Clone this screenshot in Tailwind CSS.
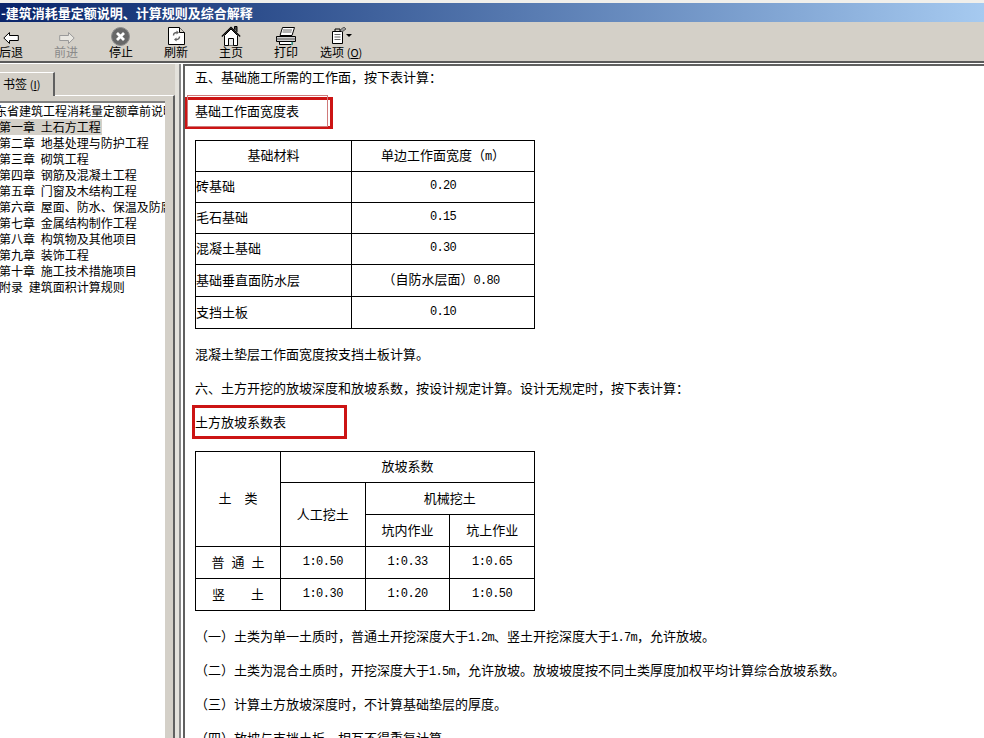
<!DOCTYPE html>
<html lang="zh">
<head>
  <meta charset="UTF-8" />
  <title>建筑消耗量定额说明、计算规则及综合解释</title>
  <script src="https://cdn.jsdelivr.net/npm/@tailwindcss/browser@4"></script>
</head>
<body class="w-[984px] h-[738px] overflow-hidden bg-[#d4d0c8] flex flex-col text-black font-['Noto_Sans_CJK_SC',sans-serif] text-[12px]">

  <!-- Title bar -->
  <div class="h-[3px] bg-[#f0efeb]"></div>
  <div class="h-[19px] bg-gradient-to-r from-[#0a246a] to-[#a6caf0] text-white font-bold text-[13px] leading-[19px] whitespace-nowrap pl-[1px]">-建筑消耗量定额说明、计算规则及综合解释</div>

  <!-- Toolbar -->
  <div class="h-[41px] relative border-b-2 border-[#5a5a5a] shrink-0">
    <div class="absolute left-0 top-0 w-[24px]">
      <svg class="absolute left-[3px] top-[10px]" width="16" height="12" viewBox="0 0 16 12"><path d="M6.500.5.800 6l5.700 5.500V8.500h8.800v-5H6.500z" fill="#fff" stroke="#000"/></svg>
      <span class="absolute -left-[1px] top-[21px] whitespace-nowrap">后退</span>
    </div>
    <div class="absolute left-[54px] top-0 w-[24px] text-[#8a8a8a]">
      <svg class="absolute left-[5px] top-[10px]" width="16" height="12" viewBox="0 0 16 12"><path d="M9.500.5 15.200 6l-5.700 5.500V8.500H.7v-5h8.800z" fill="#e9e7e1" stroke="#9a9a9a"/></svg>
      <span class="absolute left-0 top-[21px] whitespace-nowrap">前进</span>
    </div>
    <div class="absolute left-[109px] top-0 w-[24px]">
      <svg class="absolute left-[2px] top-[5px]" width="19" height="19" viewBox="0 0 19 19"><circle cx="9.500" cy="9.500" r="9" fill="#686868" stroke="#8c8c8c"/><path d="M6 6l7 7m0-7l-7 7" stroke="#fff" stroke-width="2.800"/></svg>
      <span class="absolute left-0 top-[21px] whitespace-nowrap">停止</span>
    </div>
    <div class="absolute left-[164px] top-0 w-[24px]">
      <svg class="absolute left-[4px] top-[5px]" width="17" height="18" viewBox="0 0 17 18"><path d="M.5.5h11l5 5v12H.5z" fill="#fff" stroke="#000"/><path d="M11.500.5v5h5" fill="#d4d0c8" stroke="#000"/><path d="M5.500 8.500c0-2 1.500-3 3.500-3" fill="none" stroke="#666" stroke-width="1.400"/><path d="M8.500 3.500l2.500 2-2.500 2z" fill="#666"/><path d="M11.500 9.500c0 2-1.500 3-3.500 3" fill="none" stroke="#666" stroke-width="1.400"/><path d="M8.500 10.500l-2.500 2 2.500 2z" fill="#666"/></svg>
      <span class="absolute left-0 top-[21px] whitespace-nowrap">刷新</span>
    </div>
    <div class="absolute left-[219px] top-0 w-[24px]">
      <svg class="absolute left-[2px] top-[4px]" width="20" height="20" viewBox="0 0 20 20"><path d="M3.500 9.500v10h13v-10L10 3z" fill="#fff" stroke="#000"/><path d="M.8 10.500 10 1.500l9.200 9" fill="none" stroke="#000" stroke-width="1.300"/><path d="M7.500 19.500v-7h5v7" fill="#e8e8e8" stroke="#000"/><path d="M13.500 3.500V.5h2.500v5.500" fill="#444" stroke="#000"/></svg>
      <span class="absolute left-0 top-[21px] whitespace-nowrap">主页</span>
    </div>
    <div class="absolute left-[274px] top-0 w-[24px]">
      <svg class="absolute left-[2px] top-[5px]" width="20" height="19" viewBox="0 0 20 19"><path d="M6.500.5h12l-2.500 8H4z" fill="#fff" stroke="#000"/><path d="M7 3h9M6.500 5h9" stroke="#666"/><path d="M.5 9.500h19v5H.5z" fill="#d0d0d0" stroke="#000"/><path d="M.5 12h19" stroke="#555"/><path d="M3.500 14.500h13v3h-13z" fill="#fff" stroke="#000"/><path d="M16 15v3" stroke="#4fb3a5" stroke-width="1.500"/></svg>
      <span class="absolute left-0 top-[21px] whitespace-nowrap">打印</span>
    </div>
    <div class="absolute left-[320px] top-0 w-[42px]">
      <svg class="absolute left-[12px] top-[5px]" width="20" height="17" viewBox="0 0 20 17"><path d="M.5 4.500h10v12H.5z" fill="#fff" stroke="#000"/><path d="M2.500 7.500h6M2.500 10h6M2.500 12.500h6" stroke="#666"/><path d="M3 4V2h5v2" fill="none" stroke="#000"/><path d="M8 3l4-3 2 2-4 3z" fill="#999" stroke="#333" stroke-width=".7"/><path d="M14 7h6l-3 3z" fill="#000"/></svg>
      <span class="absolute left-0 top-[21px] whitespace-nowrap">选项 <span class="text-[11px]">(<span class="underline">O</span>)</span></span>
    </div>
  </div>

  <div class="flex-1 flex min-h-0 border-t border-white">
    <!-- Left pane -->
    <div class="w-[175px] shrink-0 pt-[8px] flex flex-col">
      <div class="relative h-[24px] -mb-[1px] w-[55px] bg-[#d4d0c8] border-r-2 border-t border-[#606060] border-t-white pl-[3px] leading-[22px] whitespace-nowrap">书签 <span class="text-[11px]">(<span class="underline">I</span>)</span></div>
      <div class="flex-1 min-h-0 border-t border-white border-r-2 border-r-[#606060] pr-[8px] pt-[5px]">
        <div class="h-full bg-white border-t-2 border-[#808080] overflow-hidden">
          <ul class="-ml-[1px] leading-[16px] whitespace-nowrap overflow-hidden [word-spacing:3px]">
            <li class="-ml-[4px]">东省建筑工程消耗量定额章前说明</li>
            <li class="bg-[#d4d0c8] w-[103px]">第一章 土石方工程</li>
            <li>第二章 地基处理与防护工程</li>
            <li>第三章 砌筑工程</li>
            <li>第四章 钢筋及混凝土工程</li>
            <li>第五章 门窗及木结构工程</li>
            <li>第六章 屋面、防水、保温及防腐工程</li>
            <li>第七章 金属结构制作工程</li>
            <li>第八章 构筑物及其他项目</li>
            <li>第九章 装饰工程</li>
            <li>第十章 施工技术措施项目</li>
            <li>附录 建筑面积计算规则</li>
          </ul>
        </div>
      </div>
    </div>

    <!-- Splitter -->
    <div class="w-[8px] shrink-0 flex">
      <div class="w-[6px] bg-[#e4e2dc] border-r-2 border-[#8a8a8a]"></div>
      <div class="w-[2px] bg-white"></div>
    </div>

    <!-- Document -->
    <div class="flex-1 min-w-0 bg-white border-l-[2px] border-t-[2px] border-[#606060] pl-[10px] pt-[3px] overflow-hidden relative text-[13px]">
      <p class="h-[16px] leading-[16px] whitespace-nowrap">五、基础施工所需的工作面，按下表计算：</p>
      <p class="mt-[18px] h-[16px] leading-[16px]">基础工作面宽度表</p>

      <div class="absolute left-0 top-[31px] w-[148px] h-[32px] border-[3px] border-[#cc1414]"></div>
      <div class="absolute left-[2px] top-[29px] w-[141px] h-[32px] border border-[#d07a7a]"></div>

      <table class="mt-[21px] border-collapse border border-black table-fixed w-[340px]">
        <tbody>
          <tr class="h-[31px]"><td class="border border-black w-[156px] text-center pb-[2px]">基础材料</td><td class="border border-black text-center pb-[2px]">单边工作面宽度（<span class="font-['Liberation_Mono'] text-[12px]">m</span>）</td></tr>
          <tr class="h-[31px]"><td class="border border-black pb-[2px]">砖基础</td><td class="border border-black text-center font-['Liberation_Mono'] text-[12px] tracking-[-0.7px] pb-[2px]">0.20</td></tr>
          <tr class="h-[31px]"><td class="border border-black pb-[2px]">毛石基础</td><td class="border border-black text-center font-['Liberation_Mono'] text-[12px] tracking-[-0.7px] pb-[2px]">0.15</td></tr>
          <tr class="h-[31px]"><td class="border border-black pb-[2px]">混凝土基础</td><td class="border border-black text-center font-['Liberation_Mono'] text-[12px] tracking-[-0.7px] pb-[2px]">0.30</td></tr>
          <tr class="h-[32px]"><td class="border border-black pb-[2px]">基础垂直面防水层</td><td class="border border-black text-center pb-[2px] pr-[4px]">（自防水层面）<span class="font-['Liberation_Mono'] text-[12px] tracking-[-0.7px]">0.80</span></td></tr>
          <tr class="h-[32px]"><td class="border border-black pb-[2px]">支挡土板</td><td class="border border-black text-center font-['Liberation_Mono'] text-[12px] tracking-[-0.7px] pb-[2px]">0.10</td></tr>
        </tbody>
      </table>

      <p class="mt-[17px] h-[16px] leading-[16px]">混凝土垫层工作面宽度按支挡土板计算。</p>
      <p class="mt-[18px] h-[16px] leading-[16px] whitespace-nowrap">六、土方开挖的放坡深度和放坡系数，按设计规定计算。设计无规定时，按下表计算：</p>
      <p class="mt-[18px] h-[16px] leading-[16px]">土方放坡系数表</p>

      <div class="absolute left-[7px] top-[339px] w-[155px] h-[34px] border-[3px] border-[#cc1414]"></div>

      <table class="mt-[21px] border-collapse border border-black table-fixed w-[340px]">
        <tbody>
          <tr class="h-[31px]"><td rowspan="3" class="border border-black w-[85px] text-center pb-[2px]">土　类</td><td colspan="3" class="border border-black text-center pb-[2px]">放坡系数</td></tr>
          <tr class="h-[32px]"><td rowspan="2" class="border border-black w-[85px] text-center pb-[2px]">人工挖土</td><td colspan="2" class="border border-black text-center pb-[2px]">机械挖土</td></tr>
          <tr class="h-[32px]"><td class="border border-black w-[85px] text-center pb-[2px]">坑内作业</td><td class="border border-black text-center pb-[2px]">坑上作业</td></tr>
          <tr class="h-[32px]"><td class="border border-black text-center [word-spacing:4px] pb-[2px]">普 通 土</td><td class="border border-black text-center font-['Liberation_Mono'] text-[12px] tracking-[-0.5px] pb-[2px]">1:0.50</td><td class="border border-black text-center font-['Liberation_Mono'] text-[12px] tracking-[-0.5px] pb-[2px]">1:0.33</td><td class="border border-black text-center font-['Liberation_Mono'] text-[12px] tracking-[-0.5px] pb-[2px]">1:0.65</td></tr>
          <tr class="h-[32px]"><td class="border border-black text-center pb-[2px]">竖　　土</td><td class="border border-black text-center font-['Liberation_Mono'] text-[12px] tracking-[-0.5px] pb-[2px]">1:0.30</td><td class="border border-black text-center font-['Liberation_Mono'] text-[12px] tracking-[-0.5px] pb-[2px]">1:0.20</td><td class="border border-black text-center font-['Liberation_Mono'] text-[12px] tracking-[-0.5px] pb-[2px]">1:0.50</td></tr>
        </tbody>
      </table>

      <p class="mt-[17px] h-[16px] leading-[16px] whitespace-nowrap">（一）土类为单一土质时，普通土开挖深度大于<span class="font-['Liberation_Mono'] text-[12px] tracking-[-0.7px]">1.2m</span>、竖土开挖深度大于<span class="font-['Liberation_Mono'] text-[12px] tracking-[-0.7px]">1.7m</span>，允许放坡。</p>
      <p class="mt-[18px] h-[16px] leading-[16px] whitespace-nowrap">（二）土类为混合土质时，开挖深度大于<span class="font-['Liberation_Mono'] text-[12px] tracking-[-0.7px]">1.5m</span>，允许放坡。放坡坡度按不同土类厚度加权平均计算综合放坡系数。</p>
      <p class="mt-[18px] h-[16px] leading-[16px] whitespace-nowrap">（三）计算土方放坡深度时，不计算基础垫层的厚度。</p>
      <p class="mt-[18px] h-[16px] leading-[16px] whitespace-nowrap">（四）放坡与支挡土板，相互不得重复计算。</p>
    </div>
  </div>
</body>
</html>
